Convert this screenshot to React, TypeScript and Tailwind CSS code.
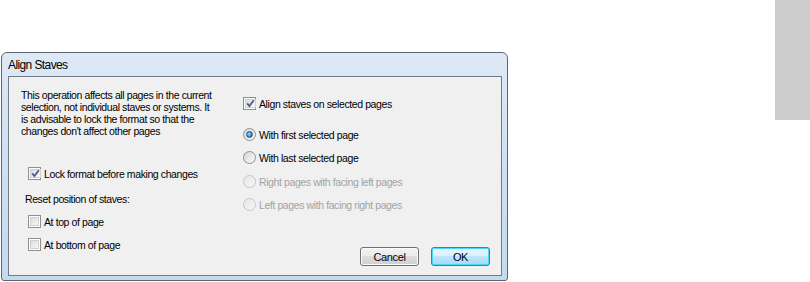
import React from "react";

function CheckBox({ checked }: { checked?: boolean }) {
  return (
    <span className="w-[13px] h-[13px] shrink-0 border border-[#8f8f8f] bg-white p-[1px] flex">
      <span className="flex-1 border border-[#d0d0d0] bg-gradient-to-br from-[#dcdcdc] to-[#f8f8f8] flex items-center justify-center">
        {checked && (
          <svg width="9" height="9" viewBox="0 0 9 9">
            <path d="M1.2 4.4 L3.4 7 L7.8 1.2" fill="none" stroke="#4a5f8f" strokeWidth="1.8" strokeLinejoin="miter" />
          </svg>
        )}
      </span>
    </span>
  );
}

function Radio({ checked, disabled }: { checked?: boolean; disabled?: boolean }) {
  return (
    <span
      className={`w-[13px] h-[13px] shrink-0 rounded-full border flex items-center justify-center ${
        disabled
          ? "border-[#c6c6c6] bg-gradient-to-br from-[#e6e6e6] to-[#f6f6f6]"
          : "border-[#8f8f8f] bg-gradient-to-br from-[#d6d6d6] to-[#fbfbfb]"
      }`}
    >
      {checked && (
        <span className="w-[7px] h-[7px] rounded-full bg-[radial-gradient(circle_at_40%_40%,#9fdcfb,#2c74b4_70%)] border border-[#1b5a92]" />
      )}
    </span>
  );
}

function Option({
  children,
  box,
  className = "",
  disabled,
}: {
  children: React.ReactNode;
  box: React.ReactNode;
  className?: string;
  disabled?: boolean;
}) {
  return (
    <div className={`flex items-center gap-[3px] h-[13px] ${className}`}>
      {box}
      <span className={disabled ? "text-[#a3a3a3]" : "text-black"}>{children}</span>
    </div>
  );
}

export default function App() {
  return (
    <div
      className="w-[810px] h-[282px] bg-white flex items-start overflow-hidden text-[10.5px] leading-[12px] tracking-[-0.4px]"
      style={{ fontFamily: '"Liberation Sans", Arial, sans-serif' }}
    >
      {/* Dialog window */}
      <div className="ml-[1px] mt-[52px] w-[507px] h-[229px] rounded-t-[6px] rounded-b-[3px] border border-[#5b6670] bg-gradient-to-b from-[#dde9f5] via-[#cfe0f1] to-[#c6daee] flex flex-col pl-[6px] pr-[5px] pb-[4px]">
        <div className="h-[23px] flex items-center text-[12px] tracking-[-0.6px] text-black">
          Align Staves
        </div>
        <div className="flex-1 border border-[#6f7c88] bg-[#f0f0f0] flex">
          {/* Left column */}
          <div className="w-[234px] flex flex-col">
            <p className="ml-[12px] mt-[12px] w-[196px]">
              This operation affects all pages in the current selection, not individual staves or systems. It is advisable to lock the format so that the changes don't affect other pages
            </p>
            <Option className="ml-[19px] mt-[30px]" box={<CheckBox checked />}>
              Lock format before making changes
            </Option>
            <div className="ml-[16px] mt-[13px]">Reset position of staves:</div>
            <Option className="ml-[19px] mt-[10px]" box={<CheckBox />}>
              At top of page
            </Option>
            <Option className="ml-[19px] mt-[10px]" box={<CheckBox />}>
              At bottom of page
            </Option>
          </div>
          {/* Right column */}
          <div className="flex-1 flex flex-col">
            <Option className="mt-[20px]" box={<CheckBox checked />}>
              Align staves on selected pages
            </Option>
            <Option className="mt-[18px]" box={<Radio checked />}>
              With first selected page
            </Option>
            <Option className="mt-[10px]" box={<Radio />}>
              With last selected page
            </Option>
            <Option className="mt-[11px]" box={<Radio disabled />} disabled>
              Right pages with facing left pages
            </Option>
            <Option className="mt-[10px]" box={<Radio disabled />} disabled>
              Left pages with facing right pages
            </Option>
            <div className="mt-auto mb-[9px] mr-[11px] flex justify-end gap-[12px]">
              <button className="w-[59px] h-[19px] rounded-[3px] border border-[#707070] bg-[linear-gradient(#f2f2f2_0%,#ebebeb_50%,#dddddd_50%,#cfcfcf_100%)] shadow-[inset_0_0_0_1px_#fcfcfc] text-black text-[11px]">
                Cancel
              </button>
              <button className="w-[59px] h-[19px] rounded-[3px] border border-[#3c7fb1] bg-[linear-gradient(#eaf6fd_0%,#d9f0fc_50%,#bee6fd_50%,#a7d9f5_100%)] shadow-[inset_0_0_0_1px_#48d8f8] text-black text-[11px]">
                OK
              </button>
            </div>
          </div>
        </div>
      </div>
      {/* Side strip */}
      <div className="ml-auto w-[35px] h-[120px] bg-[#cccccc]" />
    </div>
  );
}
